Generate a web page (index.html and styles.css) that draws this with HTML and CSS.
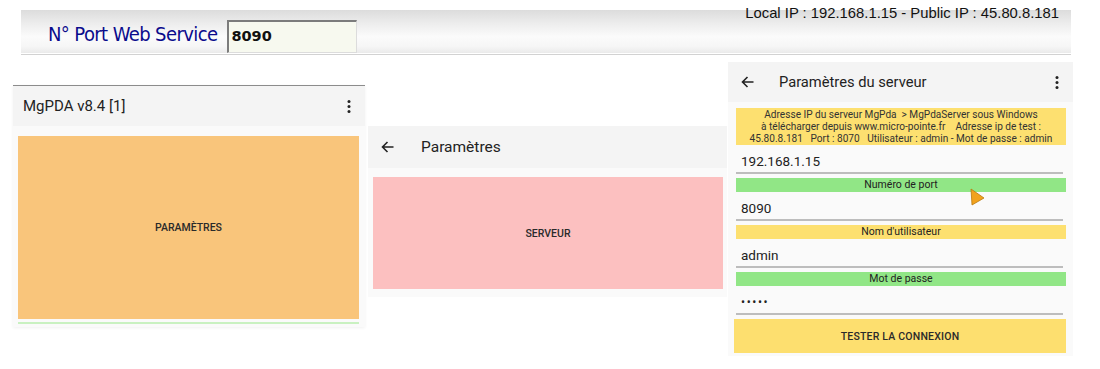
FILE: index.html
```html
<!DOCTYPE html>
<html lang="fr">
<head>
  <meta charset="UTF-8">
  <title>MgPDA - Web Service</title>
  <link rel="stylesheet" href="styles.css">
</head>
<body>
  <header class="topbar">
    <div class="port">
      <span class="port-label">N° Port Web Service</span>
      <span class="port-input">8090</span>
    </div>
    <div class="ip-info">Local IP : 192.168.1.15 - Public IP : 45.80.8.181</div>
  </header>
  <div class="topbar-rule"></div>

  <main class="screens">
    <!-- Home screen -->
    <section class="phone phone-home">
      <div class="appbar">
        <span class="appbar-title">MgPDA v8.4 [1]</span>
        <svg class="kebab" width="4" height="13" viewBox="0 0 4 13"><circle cx="2" cy="1.6" r="1.5"/><circle cx="2" cy="6.5" r="1.5"/><circle cx="2" cy="11.4" r="1.5"/></svg>
      </div>
      <div class="tile tile-orange">PARAMÈTRES</div>
      <div class="tile-next"></div>
    </section>

    <!-- Settings screen -->
    <section class="phone phone-settings">
      <div class="appbar">
        <svg class="back" width="13" height="12" viewBox="0 0 13 12"><path d="M12.5 6H1.5M6.5 1L1.5 6L6.5 11"/></svg>
        <span class="appbar-title">Paramètres</span>
      </div>
      <div class="tile tile-pink">SERVEUR</div>
    </section>

    <!-- Server settings screen -->
    <section class="phone phone-server">
      <div class="appbar">
        <svg class="back" width="13" height="12" viewBox="0 0 13 12"><path d="M12.5 6H1.5M6.5 1L1.5 6L6.5 11"/></svg>
        <span class="appbar-title">Paramètres du serveur</span>
        <svg class="kebab" width="4" height="13" viewBox="0 0 4 13"><circle cx="2" cy="1.6" r="1.5"/><circle cx="2" cy="6.5" r="1.5"/><circle cx="2" cy="11.4" r="1.5"/></svg>
      </div>
      <div class="info">Adresse IP du serveur MgPda  &gt; MgPdaServer sous Windows
à télécharger depuis www.micro-pointe.fr    Adresse ip de test :
45.80.8.181   Port : 8070   Utilisateur : admin - Mot de passe : admin</div>
      <div class="field field-first">192.168.1.15</div>
      <div class="label label-green">Numéro de port</div>
      <div class="field">8090</div>
      <div class="label label-yellow">Nom d'utilisateur</div>
      <div class="field">admin</div>
      <div class="label label-green">Mot de passe</div>
      <div class="field field-pass">•••••</div>
      <div class="btn-test">TESTER LA CONNEXION</div>

      <!-- mouse pointer caught in the capture -->
      <svg class="pointer" width="15" height="18" viewBox="0 0 15 18"><polygon points="1,1 2,17 14,10"/></svg>
    </section>
  </main>
</body>
</html>
```

FILE: styles.css
```css
/* Global */
body {
  margin: 0;
  background-color: #ffffff;
  font-family: Roboto, "Noto Sans", sans-serif;
  color: #212121;
}

/* Top bar (desktop window) */
.topbar {
  margin: 10px 29px 0 21px;
  height: 43px;
  display: flex;
  justify-content: space-between;
  background: linear-gradient(to bottom, #dcdcdc 0%, #ececec 30%, #fbfbfb 62%, #f6f6f6 85%, #eaeaea 100%);
}

.topbar-rule {
  margin: 1px 29px 0 21px;
  height: 1px;
  background-color: #d2d2d2;
}

.port {
  align-self: flex-end;
  display: flex;
  align-items: baseline;
  gap: 10px;
  padding-left: 27px;
}

.port-label {
  font-family: "DejaVu Sans", Verdana, sans-serif;
  font-stretch: condensed;
  font-size: 20px;
  line-height: 24px;
  letter-spacing: -0.6px;
  color: #0b0b8c;
}

.port-input {
  width: 125px;
  height: 24px;
  padding: 6px 0 0 2px;
  border-top: 2px solid #7c7c7c;
  border-left: 2px solid #7c7c7c;
  border-right: 1px solid #dcdcdc;
  border-bottom: 1px solid #dcdcdc;
  background-color: #f7f9ef;
  font-family: "DejaVu Sans", Verdana, sans-serif;
  font-weight: bold;
  font-size: 14.5px;
  line-height: 17px;
  color: #111;
}

.ip-info {
  align-self: flex-start;
  margin-top: -5px;
  margin-right: 12px;
  font-family: "Liberation Sans", Arial, sans-serif;
  font-size: 14.8px;
  line-height: 17px;
  color: #111;
}

/* Phone captures */
.screens {
  display: flex;
  align-items: flex-start;
  padding-left: 13px;
}

.phone {
  background-color: #fafafa;
}

.appbar {
  display: flex;
  align-items: center;
  background-color: #f4f4f4;
}

.appbar-title {
  flex: 1;
  font-weight: 400;
  color: #222;
}

.kebab {
  fill: #222;
}

.back {
  fill: none;
  stroke: #222;
  stroke-width: 1.6;
}

.tile {
  display: flex;
  align-items: center;
  justify-content: center;
  font-size: 10.5px;
  font-weight: 500;
  color: #2a2a2a;
}

/* Home */
.phone-home {
  width: 352px;
  margin-top: 30px;
  padding-bottom: 3px;
  border-top: 1px solid #8c8c8c;
  box-shadow: 0 1px 3px rgba(0, 0, 0, 0.06);
}

.phone-home .appbar {
  height: 40px;
  padding: 0 14px 0 10px;
}

.phone-home .appbar-title {
  font-size: 15px;
}

.tile-orange {
  height: 183px;
  margin: 10px 6px 0 5px;
  background-color: #f9c57b;
}

.tile-next {
  height: 2px;
  margin: 3px 6px 0 5px;
  background-color: #c9f1c1;
}

/* Settings */
.phone-settings {
  width: 359px;
  margin-top: 71px;
  margin-left: 3px;
  padding-bottom: 8px;
}

.phone-settings .appbar {
  height: 42px;
  padding-left: 13px;
  gap: 27px;
}

.phone-settings .appbar-title {
  font-size: 15.5px;
}

.tile-pink {
  height: 112px;
  margin: 9px 4px 0 5px;
  background-color: #fcc0c0;
}

/* Server settings */
.phone-server {
  position: relative;
  width: 345px;
  margin-top: 7px;
  margin-left: 1px;
  padding-bottom: 3px;
}

.phone-server .appbar {
  height: 40px;
  padding: 0 14px 0 13px;
  gap: 25px;
}

.phone-server .appbar-title {
  font-size: 14.7px;
}

.info {
  margin: 6px 7px 0 8px;
  padding: 1px 0 0;
  height: 36px;
  background-color: #fde070;
  white-space: pre;
  text-align: center;
  font-size: 10.1px;
  line-height: 12px;
  color: #333;
}

.field {
  height: 24px;
  margin: 0 10px 0 8px;
  padding: 0 5px 3px;
  display: flex;
  align-items: flex-end;
  border-bottom: 2px solid #bdbdbd;
  font-size: 13.5px;
  line-height: 16px;
  color: #222;
}

.field-pass {
  font-size: 12px;
  letter-spacing: 1.6px;
}

.label {
  height: 14px;
  margin: 4px 7px 0 8px;
  text-align: center;
  font-size: 10.5px;
  line-height: 14px;
  color: #222;
}

.label-green {
  background-color: #91e686;
}

.label-yellow {
  background-color: #fde070;
}

.btn-test {
  height: 34px;
  margin: 4px 7px 0 6px;
  display: flex;
  align-items: center;
  justify-content: center;
  background-color: #fddf6f;
  font-size: 10.5px;
  font-weight: 500;
  letter-spacing: 0.2px;
  color: #2a2a2a;
}

.pointer {
  position: absolute;
  left: 242px;
  top: 126px;
  fill: #f2a21d;
  stroke: #b9780f;
  stroke-width: 0.8;
}
```
